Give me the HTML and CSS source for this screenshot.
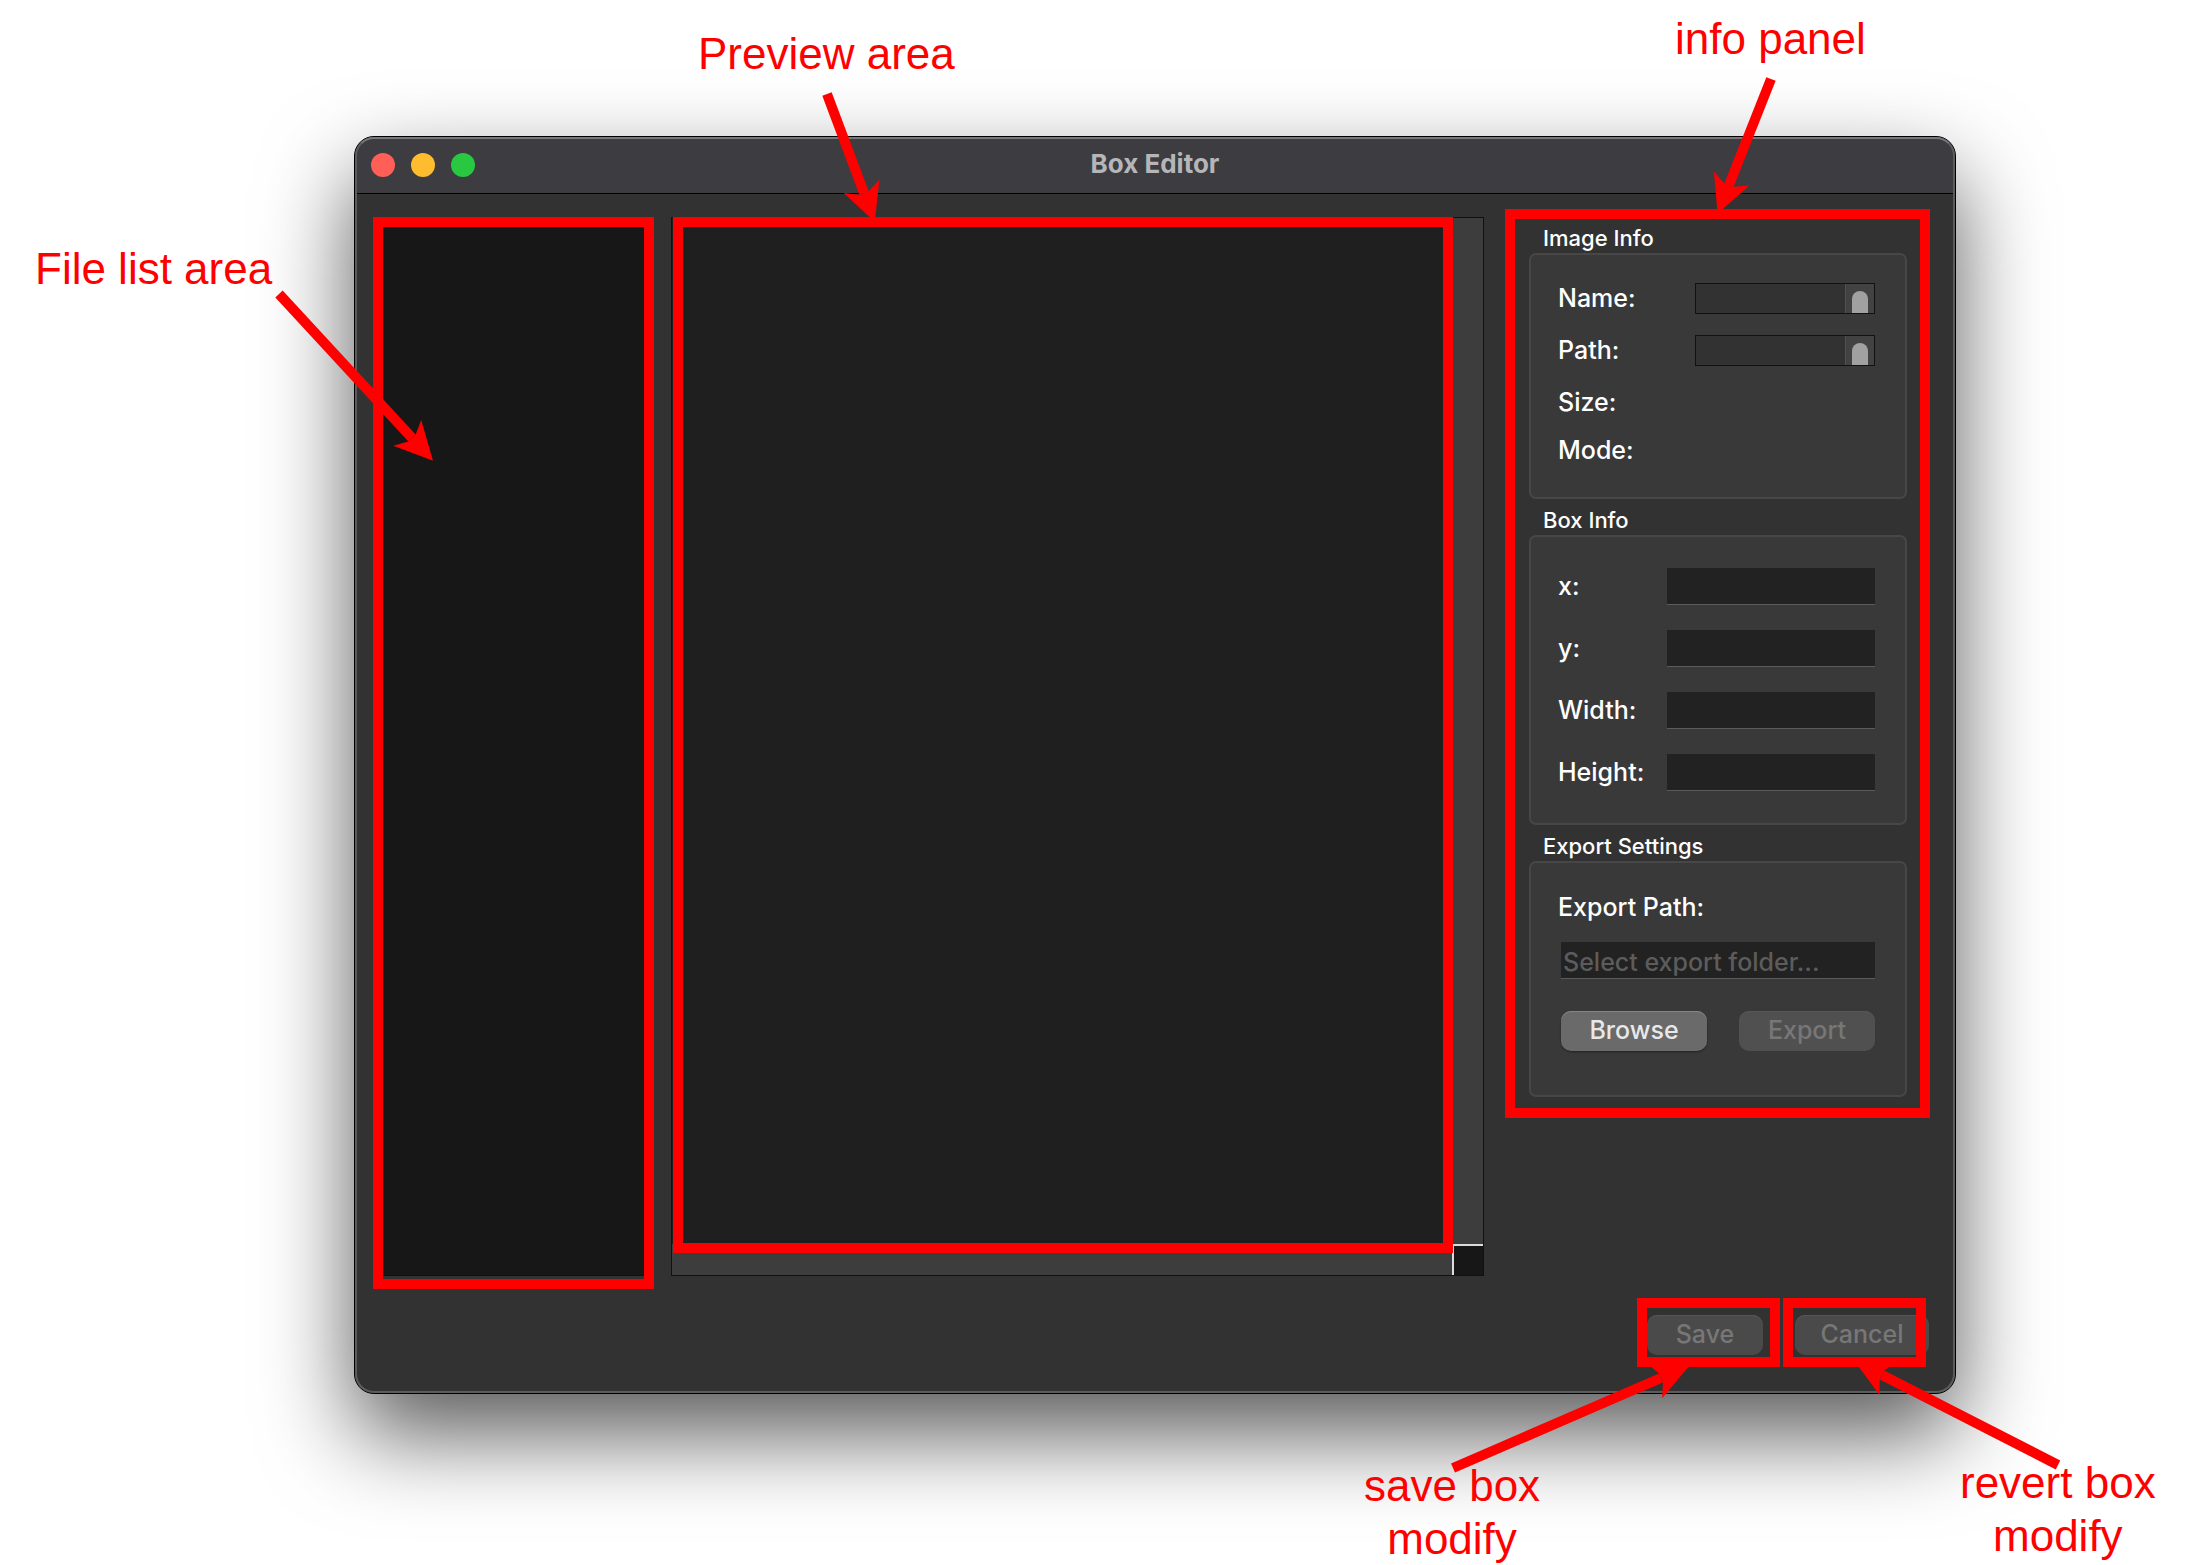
FILE: index.html
```html
<!DOCTYPE html>
<html lang="en">
<head>
<meta charset="utf-8">
<title>Box Editor</title>
<link rel="stylesheet" href="styles.css">
</head>
<body>
<div class="page">
  <main class="window">
    <header class="titlebar">
      <div class="lights">
        <button class="light light--close" type="button" aria-label="Close"></button>
        <button class="light light--minimize" type="button" aria-label="Minimize"></button>
        <button class="light light--zoom" type="button" aria-label="Zoom"></button>
      </div>
      <h1 class="title">Box Editor</h1>
    </header>

    <div class="workspace">
      <div class="file-list"><span class="mark mark--list"></span></div>

      <div class="preview">
        <div class="canvas"></div>
        <div class="scroll scroll--v"></div>
        <div class="scroll scroll--h"></div>
        <div class="corner"></div>
        <span class="mark mark--preview"></span>
      </div>

      <aside class="panel">
        <section class="group">
          <h2 class="group-title">Image Info</h2>
          <div class="group-body">
            <div class="row"><label for="name">Name:</label>
              <div class="viewer"><input id="name" class="viewer-text" readonly><span class="viewer-bar"><span class="thumb"></span></span></div></div>
            <div class="row"><label for="path">Path:</label>
              <div class="viewer"><input id="path" class="viewer-text" readonly><span class="viewer-bar"><span class="thumb"></span></span></div></div>
            <div class="row">Size:</div>
            <div class="row row--close">Mode:</div>
          </div>
        </section>
        <section class="group">
          <h2 class="group-title">Box Info</h2>
          <div class="group-body group-body--fields">
            <div class="row"><label for="x">x:</label><input class="field" id="x" type="text"></div>
            <div class="row"><label for="y">y:</label><input class="field" id="y" type="text"></div>
            <div class="row"><label for="w">Width:</label><input class="field" id="w" type="text"></div>
            <div class="row"><label for="h">Height:</label><input class="field" id="h" type="text"></div>
          </div>
        </section>
        <section class="group">
          <h2 class="group-title">Export Settings</h2>
          <div class="group-body group-body--export">
            <label for="export-path">Export Path:</label>
            <input class="field field--wide" id="export-path" type="text" placeholder="Select export folder...">
            <div class="actions">
              <button class="button button--browse" type="button">Browse</button>
              <button class="button button--export" type="button" disabled>Export</button>
            </div>
          </div>
        </section>
        <span class="mark mark--panel"></span>
      </aside>
    </div>

    <footer class="footer">
      <div class="slot"><button class="button button--save" type="button" disabled>Save</button><span class="mark mark--save"></span></div>
      <div class="slot"><button class="button button--cancel" type="button" disabled>Cancel</button><span class="mark mark--cancel"></span></div>
    </footer>
  </main>

  <svg class="arrows" aria-hidden="true">
    <defs>
      <marker id="head" markerUnits="userSpaceOnUse" markerWidth="40" markerHeight="40" refX="31" refY="20" viewBox="0 0 40 40" orient="auto" overflow="visible">
        <path d="M62 20 24 1 31 15V25L24 39Z" fill="#f00"/>
      </marker>
    </defs>
    <g stroke="#f00" stroke-width="10" fill="none" marker-end="url(#head)">
      <path d="M279 294 412 438"/>
      <path d="M827 94 864 193"/>
      <path d="M1771 79 1729 185"/>
      <path d="M1453 1468 1661 1378"/>
      <path d="M2058 1465 1882 1375"/>
    </g>
  </svg>
  <p class="note note--list">File list area</p>
  <p class="note note--preview">Preview area</p>
  <p class="note note--panel">info panel</p>
  <p class="note note--save">save box<br>modify</p>
  <p class="note note--cancel">revert box<br>modify</p>
</div>
</body>
</html>
```

FILE: styles.css
```css
* { box-sizing: border-box; }

body {
  margin: 0;
  background: #fff;
  color: #fff;
  font: 500 25px/31px Inter, "Liberation Sans", sans-serif;
}

h1, h2, p { margin: 0; }
button, input { font: inherit; border: 0; padding: 0; margin: 0; }

.page {
  position: relative;
  display: flex;
  flex-direction: column;
  min-height: 100vh;
  padding: 136px 255px 171px 354px;
  overflow: hidden;
}

/* Window frame */
.window {
  position: relative;
  flex: 1;
  display: flex;
  flex-direction: column;
  border: 1px solid #000;
  border-radius: 20px;
  background: #323232;
  box-shadow: 0 40px 90px rgba(0, 0, 0, .65);
}
.window::after {
  content: "";
  position: absolute;
  inset: 0;
  border: 2px solid #5c5c5c;
  border-top-color: #77777a;
  border-radius: 19px;
  pointer-events: none;
}

.titlebar {
  display: grid;
  grid-template-columns: 1fr auto 1fr;
  align-items: center;
  height: 57px;
  padding: 0 16px;
  border-bottom: 1px solid #000;
  border-radius: 19px 19px 0 0;
  background: #3c3c41;
}
.lights { display: flex; gap: 16px; }
.light { width: 24px; height: 24px; border-radius: 50%; }
.light--close { background: #ff5f57; }
.light--minimize { background: #febc2e; }
.light--zoom { background: #28c840; }
.title { padding-bottom: 3px; font-size: 26px; font-weight: 700; color: #b6b6b9; }

/* Main area */
.workspace {
  flex: 1;
  display: grid;
  grid-template-columns: 280px minmax(0, 1fr) 428px;
  gap: 18px;
  padding: 23px 25px 0 18px;
}
.file-list {
  position: relative;
  border: 1px solid #111;
  background: #171717;
}
.preview {
  position: relative;
  display: grid;
  grid-template: minmax(0, 1fr) 31px / minmax(0, 1fr) 31px;
  border: 1px solid #111;
  background: #3d3d3d;
}
.canvas { background: #1f1f1f; }
.scroll { background: #3d3d3d; }
.corner {
  border: solid #ddd;
  border-width: 2px 0 0 2px;
  background: #171717;
}

/* Info panel */
.panel {
  position: relative;
  padding: 10px 23px 0 27px;
}
.group { margin-bottom: 10px; }
.group-title {
  padding-left: 14px;
  margin-bottom: 4px;
  font-size: 22px;
  line-height: 22px;
  font-weight: 500;
}
.group-body {
  padding: 28px 30px 31px 27px;
  border: 2px solid #474747;
  border-radius: 7px;
  background: #393939;
}
.group-body--fields { padding-top: 31px; padding-bottom: 32px; }
.group-body--export { padding-bottom: 44px; }

.row {
  display: flex;
  align-items: center;
  justify-content: space-between;
}
.row + .row { margin-top: 21px; }
.row + .row--close { margin-top: 17px; }
.group-body--fields .row + .row { margin-top: 25px; }

.viewer {
  display: flex;
  width: 180px;
  height: 31px;
  border: 1px solid #111;
  background: #323232;
}
.viewer-text { flex: 1; min-width: 0; background: transparent; color: #fff; }
.viewer-bar {
  display: flex;
  align-items: flex-end;
  justify-content: center;
  width: 29px;
  border-left: 1px solid #505050;
  background: #424242;
}
.thumb { width: 16px; height: 22px; border-radius: 8px 8px 0 0; background: #a1a1a1; }

.field {
  width: 208px;
  height: 37px;
  padding: 3px 2px 0;
  border-bottom: 1px solid #5b5b5b;
  background: #222;
  color: #fff;
}
.field::placeholder { color: #5c5c5c; opacity: 1; }
.group-body--export label { display: block; padding-top: 1px; }
.field--wide { display: block; width: calc(100% - 3px); margin: 19px 0 32px 3px; }

.actions { display: flex; justify-content: space-between; padding-left: 3px; }

.button {
  display: block;
  height: 40px;
  padding-bottom: 2px;
  border-radius: 10px;
  background: #4a4a4a;
  color: #777;
  box-shadow: inset 0 1px #565656;
}
.button--browse {
  width: 146px;
  background: #6a6a6a;
  color: #e8e8e8;
  box-shadow: inset 0 1px #868686, 0 1px 2px rgba(0, 0, 0, .4);
}
.button--export { width: 136px; background: #505050; }
.button--save { width: 116px; }
.button--cancel { width: 134px; }

.footer {
  display: flex;
  justify-content: flex-end;
  gap: 32px;
  padding: 39px 26px 38px;
}
.slot { position: relative; }

/* Highlight frames drawn over the regions */
.mark {
  position: absolute;
  border: 10px solid #f00;
  pointer-events: none;
}
.mark--list { inset: -1px -2px -14px -1px; }
.mark--preview { inset: -1px 30px 22px 1px; }
.mark--panel { inset: -8px 0 auto 3px; height: 909px; }
.mark--save { inset: -17px -17px -12px -10px; }
.mark--cancel { inset: -17px 3px -12px -12px; }

/* Callouts */
.arrows {
  position: absolute;
  inset: 0;
  width: 100%;
  height: 100%;
  pointer-events: none;
}
.note {
  position: absolute;
  color: #f00;
  font: 44px/53px "Liberation Sans", Arial, sans-serif;
  text-align: center;
  white-space: nowrap;
}
.note--list { left: 35px; top: 242px; }
.note--preview { left: 698px; top: 27px; }
.note--panel { left: 1675px; top: 12px; }
.note--save { left: 1364px; top: 1459px; }
.note--cancel { left: 1960px; top: 1456px; }
```
